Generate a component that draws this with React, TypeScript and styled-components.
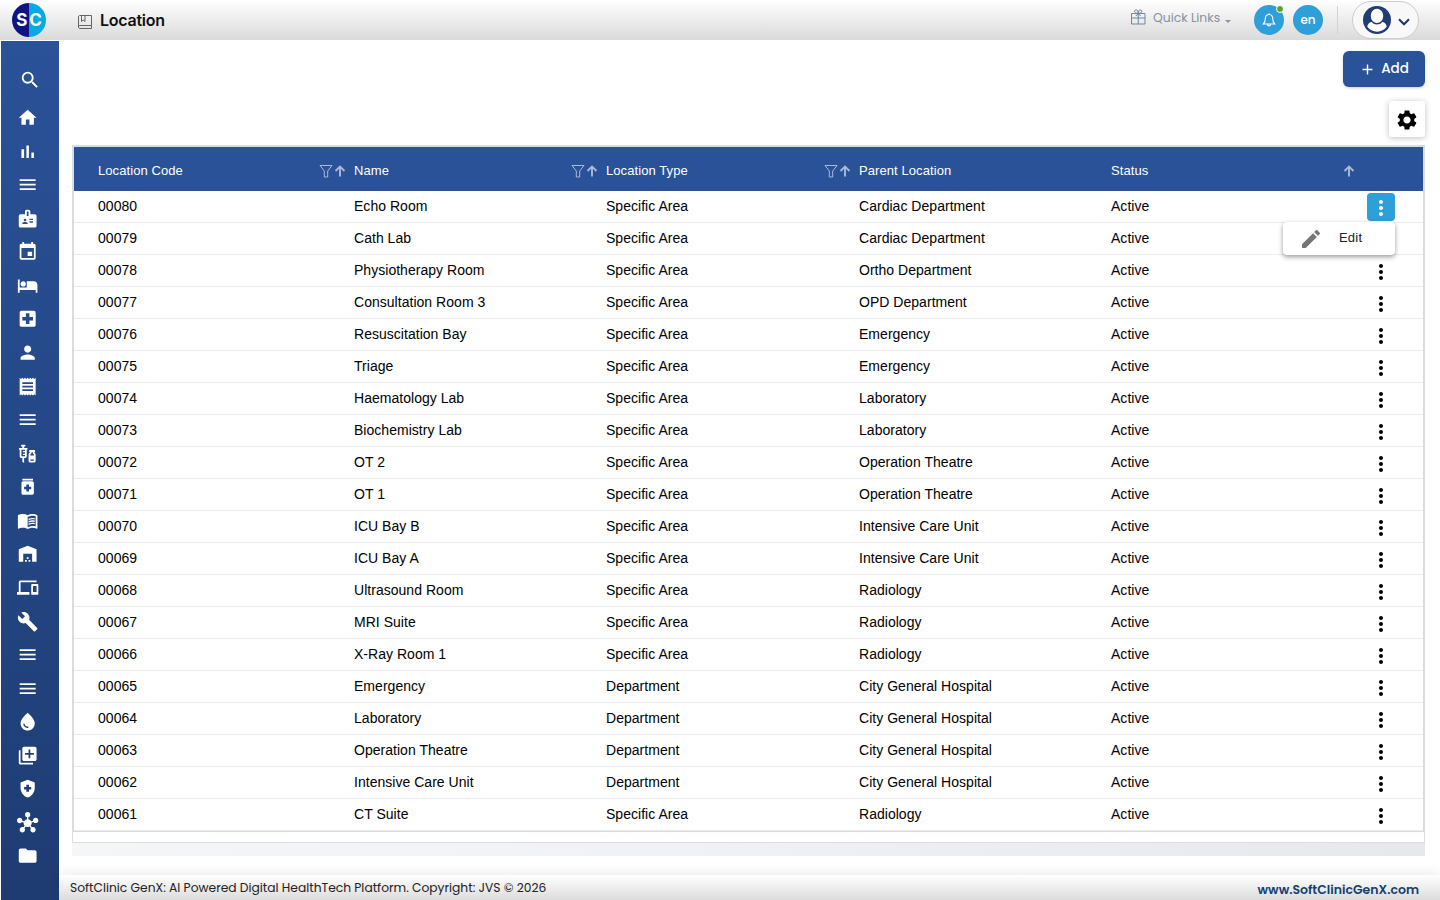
import React from 'react'
import styled, { createGlobalStyle } from 'styled-components'
import type { IconType } from 'react-icons'
import {
  MdAdd,
  MdBadge,
  MdBuild,
  MdDevices,
  MdEdit,
  MdEvent,
  MdFolder,
  MdHealthAndSafety,
  MdHome,
  MdHotel,
  MdHub,
  MdLibraryAdd,
  MdLocalHospital,
  MdMedication,
  MdMenu,
  MdMenuBook,
  MdMoreVert,
  MdPerson,
  MdReceipt,
  MdSearch,
  MdSettings,
  MdVaccines,
  MdWarehouse,
  MdWaterDrop,
} from 'react-icons/md'

const BarChart = ({ size = 20 }: { size?: number | string }) => (
  <svg width={size} height={size} viewBox="0 0 24 24" fill="currentColor">
    <path d="M5 9.2h3V19H5zM10.6 5h2.8v14h-2.8zm5.6 8H19v6h-2.8z" />
  </svg>
)

const menu: { label: string; icon: IconType | typeof BarChart }[] = [
  { label: 'Home', icon: MdHome },
  { label: 'Dashboard', icon: BarChart },
  { label: 'Masters', icon: MdMenu },
  { label: 'Registration', icon: MdBadge },
  { label: 'Appointments', icon: MdEvent },
  { label: 'Inpatient', icon: MdHotel },
  { label: 'Emergency', icon: MdLocalHospital },
  { label: 'Patients', icon: MdPerson },
  { label: 'Billing', icon: MdReceipt },
  { label: 'Orders', icon: MdMenu },
  { label: 'Vaccines', icon: MdVaccines },
  { label: 'Pharmacy', icon: MdMedication },
  { label: 'Records', icon: MdMenuBook },
  { label: 'Stores', icon: MdWarehouse },
  { label: 'Devices', icon: MdDevices },
  { label: 'Maintenance', icon: MdBuild },
  { label: 'Reports', icon: MdMenu },
  { label: 'Setup', icon: MdMenu },
  { label: 'Blood Bank', icon: MdWaterDrop },
  { label: 'Packages', icon: MdLibraryAdd },
  { label: 'Insurance', icon: MdHealthAndSafety },
  { label: 'Integrations', icon: MdHub },
  { label: 'Documents', icon: MdFolder },
]

const columns = [
  { title: 'Location Code', filter: true, sort: true },
  { title: 'Name', filter: true, sort: true },
  { title: 'Location Type', filter: true, sort: true },
  { title: 'Parent Location', filter: false, sort: false },
  { title: 'Status', filter: false, sort: true },
]

const locations = [
  ['00080', 'Echo Room', 'Specific Area', 'Cardiac Department'],
  ['00079', 'Cath Lab', 'Specific Area', 'Cardiac Department'],
  ['00078', 'Physiotherapy Room', 'Specific Area', 'Ortho Department'],
  ['00077', 'Consultation Room 3', 'Specific Area', 'OPD Department'],
  ['00076', 'Resuscitation Bay', 'Specific Area', 'Emergency'],
  ['00075', 'Triage', 'Specific Area', 'Emergency'],
  ['00074', 'Haematology Lab', 'Specific Area', 'Laboratory'],
  ['00073', 'Biochemistry Lab', 'Specific Area', 'Laboratory'],
  ['00072', 'OT 2', 'Specific Area', 'Operation Theatre'],
  ['00071', 'OT 1', 'Specific Area', 'Operation Theatre'],
  ['00070', 'ICU Bay B', 'Specific Area', 'Intensive Care Unit'],
  ['00069', 'ICU Bay A', 'Specific Area', 'Intensive Care Unit'],
  ['00068', 'Ultrasound Room', 'Specific Area', 'Radiology'],
  ['00067', 'MRI Suite', 'Specific Area', 'Radiology'],
  ['00066', 'X-Ray Room 1', 'Specific Area', 'Radiology'],
  ['00065', 'Emergency', 'Department', 'City General Hospital'],
  ['00064', 'Laboratory', 'Department', 'City General Hospital'],
  ['00063', 'Operation Theatre', 'Department', 'City General Hospital'],
  ['00062', 'Intensive Care Unit', 'Department', 'City General Hospital'],
  ['00061', 'CT Suite', 'Specific Area', 'Radiology'],
]

const App = () => {
  return (
    <Page>
      <GlobalStyle />
      <Header>
        <Logo>
          <span>S</span>
          <span>C</span>
        </Logo>
        <BookIcon />
        <Title>Location</Title>
        <HeaderRight>
          <GiftIcon />
          <QuickLinks>Quick Links</QuickLinks>
          <Caret />
          <RoundButton>
            <BellIcon />
            <Dot />
          </RoundButton>
          <RoundButton>en</RoundButton>
          <Divider />
          <Profile>
            <UserIcon />
            <ChevronIcon />
          </Profile>
        </HeaderRight>
      </Header>

      <Body>
        <Sidebar>
          <SearchItem aria-label="Search">
            <MdSearch size={22} />
          </SearchItem>
          {menu.map(({ label, icon: Icon }) => (
            <MenuItem key={label} aria-label={label}>
              <Icon size={21.33} />
            </MenuItem>
          ))}
        </Sidebar>

        <Main>
          <Toolbar>
            <AddButton>
              <MdAdd size={17} />
              Add
            </AddButton>
            <SettingsButton aria-label="Settings">
              <MdSettings size={24} />
            </SettingsButton>
          </Toolbar>

          <TableFrame>
            <Table>
              <HeadRow>
                {columns.map(({ title, filter, sort }) => (
                  <HeadCell key={title}>
                    {title}
                    <HeadIcons>
                      {filter && <FilterIcon />}
                      {sort && <SortIcon />}
                    </HeadIcons>
                  </HeadCell>
                ))}
              </HeadRow>
              {locations.map((cells, index) => (
                <Row key={cells[0]}>
                  {cells.map((cell, i) => (
                    <Cell key={i}>{cell}</Cell>
                  ))}
                  <Cell>Active</Cell>
                  <Action>
                    <MoreButton $active={index === 0} aria-label="Actions">
                      <MdMoreVert size={24} />
                    </MoreButton>
                    {index === 0 && (
                      <Popup>
                        <MdEdit size={24} />
                        <span>Edit</span>
                      </Popup>
                    )}
                  </Action>
                </Row>
              ))}
            </Table>
          </TableFrame>
          <Band />
          <Footer>
            <Copyright>
              SoftClinic GenX: AI Powered Digital HealthTech Platform. Copyright: JVS © 2026
            </Copyright>
            <Site>www.SoftClinicGenX.com</Site>
          </Footer>
        </Main>
      </Body>
    </Page>
  )
}

export default App

const BookIcon = () => (
  <svg width="14" height="14" viewBox="0 0 14 14" fill="none" stroke="#555" strokeWidth="0.9">
    <path d="M.5 12V2C.5 1 1 .5 2 .5h11.500v10H2C1 10.500.5 11.200.5 12s.5 1.500 1.500 1.500h11.500v-3" />
    <path d="M3.500.5v6l1.700-1.500L7 6.500v-6" />
  </svg>
)

const GiftIcon = () => (
  <svg width="15" height="16" viewBox="0 0 15 16" fill="none" stroke="#6c86a0">
    <path d="M.5 4.500h13.500v10.500H.5zM.5 9h13.500M7.250 4.500V15" />
    <path d="M7.250 4.500C5 4.500 3.500 3.300 3.500 2.200S5.800.3 6.500 1.500l.75 3 .75-3c.7-1.200 3-.4 3 .7S9.500 4.500 7.250 4.500L4.800 7M7.250 4.500L9.700 7" />
  </svg>
)

const BellIcon = () => (
  <svg width="14" height="15" viewBox="0 0 14 15" fill="none" stroke="#fff" strokeWidth="1.1">
    <path d="M7 1.500c-2.300 0-3.700 1.700-3.700 4 0 3-.8 4.300-2 5.500h11.400c-1.200-1.200-2-2.500-2-5.500 0-2.300-1.400-4-3.700-4zM7 .3v1.200M5.500 11.200c0 1 .6 1.700 1.500 1.700s1.500-.7 1.500-1.700" />
  </svg>
)

const UserIcon = () => (
  <svg width="28" height="28" viewBox="0 0 28 28">
    <circle cx="14" cy="14" r="14" fill="#203d75" />
    <path
      d="M4.200 20.500C5 17.300 7.500 15.800 10.500 15.300h7c3 .5 5.500 2 6.300 5.200A11.800 11.800 0 0 1 4.200 20.500z"
      fill="#fff"
    />
    <ellipse cx="14" cy="9.800" rx="7" ry="7.900" fill="#fff" stroke="#203d75" strokeWidth="1.500" />
  </svg>
)

const ChevronIcon = () => (
  <svg width="12" height="8" viewBox="0 0 12 8" fill="none" stroke="#1b3a6f" strokeWidth="2.100">
    <path d="M1 1.200l5 5 5-5" />
  </svg>
)

const FilterIcon = () => (
  <svg width="14" height="14" viewBox="0 0 14 14" fill="none" stroke="currentColor">
    <path d="M1 1.500h12L8.700 7v6H5.300V7z" />
  </svg>
)

const SortIcon = () => (
  <svg width="14" height="14" viewBox="0 0 14 14" fill="none" stroke="currentColor" strokeWidth="1.900">
    <path d="M7 12.500V3M2.500 7L7 2.500 11.500 7" />
  </svg>
)

const GlobalStyle = createGlobalStyle`
  * {
    box-sizing: border-box;
  }

  body {
    margin: 0;
    background: #fff;
    font-family: 'Liberation Sans', Arial, sans-serif;
  }

  button {
    font-family: inherit;
    border: none;
    padding: 0;
    background: transparent;
  }

  svg {
    flex-shrink: 0;
  }
`

const Page = styled.div`
  width: 1440px;
  height: 900px;
  overflow: hidden;
  display: flex;
  flex-direction: column;
`

const Header = styled.header`
  height: 40px;
  flex-shrink: 0;
  display: flex;
  align-items: center;
  padding: 0 21px 0 12px;
  background: linear-gradient(#fff, #dadada);
  font-family: Poppins, Inter, sans-serif;

  > svg {
    margin: 3px 8px 0 32px;
  }
`

const Logo = styled.div`
  width: 34px;
  height: 34px;
  border-radius: 50%;
  display: flex;
  align-items: center;
  justify-content: center;
  gap: 2px;
  background: linear-gradient(90deg, #0d1585 50%, #05aae3 50%);
  color: #fff;
  font-family: Inter, sans-serif;
  font-size: 17px;
  font-weight: 700;
`

const Title = styled.h1`
  margin: 0;
  font-family: Inter, sans-serif;
  font-size: 16px;
  font-weight: 600;
  letter-spacing: -0.25px;
  color: #111;
`

const HeaderRight = styled.div`
  margin-left: auto;
  height: 40px;
  display: flex;
  align-items: center;

  > svg {
    margin: -7px 7px 0 0;
  }
`

const QuickLinks = styled.span`
  margin-top: -5px;
  width: 67px;
  white-space: nowrap;
  font-size: 12.400px;
  color: #8793a0;
`

const Caret = styled.span`
  margin: 2px 23px 0 5px;
  border: 3px solid transparent;
  border-top-color: #8793a0;
  border-bottom: 0;
`

const RoundButton = styled.button`
  position: relative;
  width: 30px;
  height: 30px;
  margin-right: 9px;
  border-radius: 50%;
  display: flex;
  align-items: center;
  justify-content: center;
  background: #2e9fd8;
  color: #fff;
  font-size: 12px;
  font-weight: 500;
`

const Dot = styled.i`
  position: absolute;
  top: 0;
  right: 0;
  width: 8px;
  height: 8px;
  border: 1px solid #fff;
  border-radius: 50%;
  background: #5f9e35;
`

const Divider = styled.div`
  width: 1px;
  height: 28px;
  margin: 0 14px 0 5px;
  background: #d3d3d3;
`

const Profile = styled.div`
  width: 67px;
  height: 38px;
  border: 1px solid #ccc;
  border-radius: 19px;
  display: flex;
  align-items: center;
  gap: 7px;
  padding-left: 10px;
  background: #f8f8f8;

  svg + svg {
    margin-top: 4px;
  }
`

const Body = styled.div`
  flex: 1;
  display: flex;
  padding: 1px 0 0 1px;
`

const Sidebar = styled.nav`
  width: 58px;
  flex-shrink: 0;
  padding-top: 22px;
  background: linear-gradient(#2a5298, #1e3c72);
  display: flex;
  flex-direction: column;
`

const MenuItem = styled.button`
  height: 33.570px;
  padding-right: 4px;
  display: flex;
  align-items: center;
  justify-content: center;
  color: #fff;
`

const SearchItem = styled(MenuItem)`
  height: 38px;
  padding: 0 0 4px;
`

const Main = styled.main`
  flex: 1;
  display: flex;
  flex-direction: column;
`

const Toolbar = styled.div`
  height: 104px;
  padding: 10px 15px 0 0;
  display: flex;
  flex-direction: column;
  align-items: flex-end;
  gap: 14px;
`

const AddButton = styled.button`
  width: 82px;
  height: 36px;
  border-radius: 6px;
  display: flex;
  align-items: center;
  justify-content: center;
  gap: 5px;
  background: #2a5298;
  color: #fff;
  font-family: Poppins, Inter, sans-serif;
  font-size: 13.500px;
  font-weight: 500;
  box-shadow: 0 1px 3px rgba(0, 0, 0, 0.2);
`

const SettingsButton = styled.button`
  width: 36px;
  height: 36px;
  padding-top: 1px;
  border-radius: 3px;
  display: flex;
  align-items: center;
  justify-content: center;
  background: #fff;
  color: #000;
  box-shadow: 0 1px 6px rgba(0, 0, 0, 0.25);
`

const TableFrame = styled.section`
  width: 1353px;
  height: 698px;
  margin-left: 13px;
  border: 1px solid #dcdde0;
  border-top: 0;
`

const Table = styled.div`
  border: 1px solid #d9dbdf;
  border-top: 2px solid #d5dcea;
`

const gridColumns = `
  display: grid;
  grid-template-columns: 256px 252px 253px 252px 252px 1fr;
  padding-left: 24px;
`

const HeadRow = styled.div`
  ${gridColumns}
  height: 44px;
  background: #2a5298;
`

const HeadCell = styled.div`
  display: flex;
  align-items: center;
  padding: 3px 7px 0 0;
  font-size: 13px;
  letter-spacing: 0.08px;
  color: #fff;
`

const HeadIcons = styled.span`
  margin-left: auto;
  display: flex;
  align-items: center;
  color: #a9b9da;
`

const Row = styled.div`
  ${gridColumns}
  height: 32px;
  border-bottom: 1px solid #ececec;
`

const Cell = styled.div`
  font-size: 14px;
  line-height: 31px;
  letter-spacing: 0.03px;
  color: #000;
`

const Action = styled.div`
  position: relative;
  padding-top: 2px;
`

const MoreButton = styled.button<{ $active: boolean }>`
  width: 28px;
  height: 28px;
  margin-left: 4px;
  padding-top: 2px;
  border-radius: 4px;
  display: flex;
  align-items: center;
  justify-content: center;
  background: ${props => (props.$active ? '#2e9fd8' : 'transparent')};
  color: ${props => (props.$active ? '#fff' : '#000')};
`

const Popup = styled.div`
  position: absolute;
  z-index: 1;
  top: 31px;
  right: 28px;
  width: 112px;
  height: 33px;
  padding-left: 16px;
  border-radius: 4px;
  display: flex;
  align-items: center;
  gap: 16px;
  background: #fff;
  color: #222;
  font-size: 13px;
  letter-spacing: 0.2px;
  box-shadow: 0 2px 5px rgba(0, 0, 0, 0.4);

  svg {
    color: #757575;
  }

  span {
    padding-bottom: 2px;
  }
`

const Band = styled.div`
  width: 1353px;
  height: 13px;
  margin-left: 13px;
  background: linear-gradient(90deg, #f5f6f8, #eef1f6 50%, #e5e9ec);
`

const Footer = styled.footer`
  height: 25px;
  margin-top: 19px;
  padding: 0 21px 0 11px;
  display: flex;
  align-items: center;
  justify-content: space-between;
  background: linear-gradient(#fff, #dcdcdc);
  box-shadow: 0 -2px 12px rgba(0, 0, 0, 0.08);
  font-family: Poppins, Inter, sans-serif;
`

const Copyright = styled.span`
  font-size: 12.250px;
  color: #222;
`

const Site = styled.a`
  padding-top: 4px;
  font-size: 12.500px;
  font-weight: 600;
  color: #143f70;
`
